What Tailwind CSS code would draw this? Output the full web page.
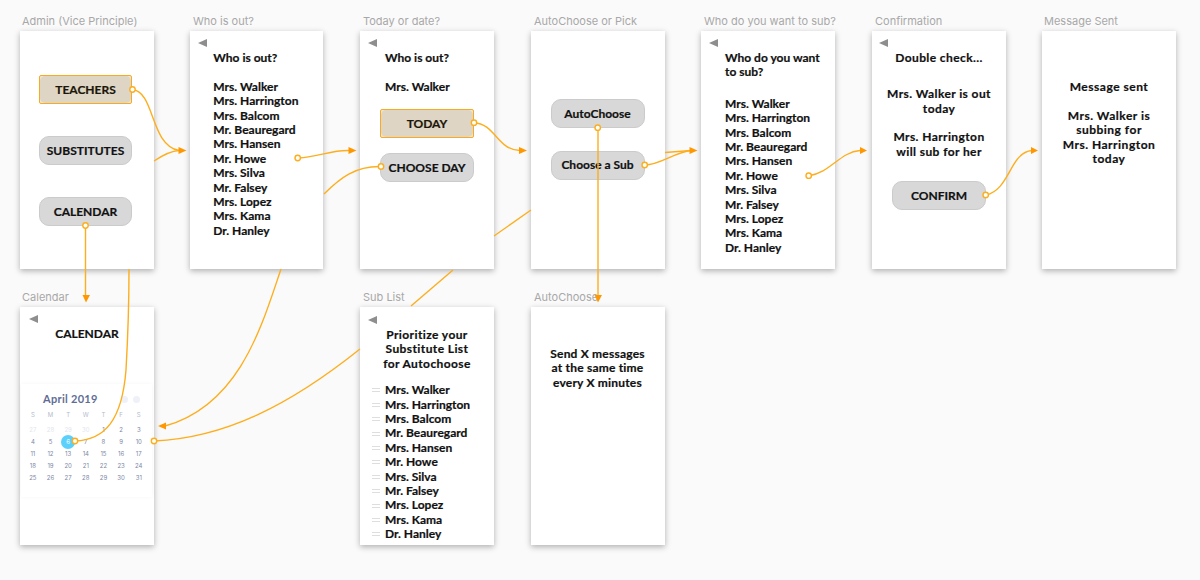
<!DOCTYPE html>
<html lang="en">
<head>
    <meta charset="UTF-8">
    <title>Substitute flow</title>
    <script src="https://cdn.jsdelivr.net/npm/@tailwindcss/browser@4"></script>
</head>
<body class="bg-[#fafafa] font-['Lato',sans-serif] text-[12px] leading-[14.4px] font-bold text-[#111] [-webkit-text-stroke:0.2px]">
<div class="relative w-[1200px] h-[580px] overflow-hidden">

    <!-- artboard labels -->
    <div class="absolute left-[22px] top-[14px] font-['Inter',sans-serif] text-[11px] font-normal text-[#a8a8a8] [-webkit-text-stroke:0]">Admin (Vice Principle)</div>
    <div class="absolute left-[193px] top-[14px] font-['Inter',sans-serif] text-[11px] font-normal text-[#a8a8a8] [-webkit-text-stroke:0]">Who is out?</div>
    <div class="absolute left-[363px] top-[14px] font-['Inter',sans-serif] text-[11px] font-normal text-[#a8a8a8] [-webkit-text-stroke:0]">Today or date?</div>
    <div class="absolute left-[534px] top-[14px] font-['Inter',sans-serif] text-[11px] font-normal text-[#a8a8a8] [-webkit-text-stroke:0]">AutoChoose or Pick</div>
    <div class="absolute left-[704px] top-[14px] font-['Inter',sans-serif] text-[11px] font-normal text-[#a8a8a8] [-webkit-text-stroke:0]">Who do you want to sub?</div>
    <div class="absolute left-[875px] top-[14px] font-['Inter',sans-serif] text-[11px] font-normal text-[#a8a8a8] [-webkit-text-stroke:0]">Confirmation</div>
    <div class="absolute left-[1044px] top-[14px] font-['Inter',sans-serif] text-[11px] font-normal text-[#a8a8a8] [-webkit-text-stroke:0]">Message Sent</div>
    <div class="absolute left-[22px] top-[290px] font-['Inter',sans-serif] text-[11px] font-normal text-[#a8a8a8] [-webkit-text-stroke:0]">Calendar</div>
    <div class="absolute left-[363px] top-[290px] font-['Inter',sans-serif] text-[11px] font-normal text-[#a8a8a8] [-webkit-text-stroke:0]">Sub List</div>
    <div class="absolute left-[534px] top-[290px] font-['Inter',sans-serif] text-[11px] font-normal text-[#a8a8a8] [-webkit-text-stroke:0]">AutoChoose</div>

    <!-- Admin -->
    <div class="absolute left-[20px] top-[31px] w-[134px] h-[238px] bg-white shadow-[0_2px_6px_rgba(0,0,0,0.3)] flex flex-col gap-[32px] pt-[44px] pl-[19px]">
        <div class="w-[93px] h-[29px] border border-[#f8ab20] rounded-[2px] bg-[#efe6d6]">
            <div class="h-full bg-[#ded5c4] rounded-[5px] flex items-center justify-center pt-px text-[#1c1608]">TEACHERS</div>
        </div>
        <div class="w-[93px] h-[29px] border border-[#cbcbcb] bg-[#d8d8d8] rounded-[10px] flex items-center justify-center pt-px">SUBSTITUTES</div>
        <div class="w-[93px] h-[29px] border border-[#cbcbcb] bg-[#d8d8d8] rounded-[10px] flex items-center justify-center pt-px">CALENDAR</div>
    </div>

    <!-- Who is out -->
    <div class="absolute left-[190.3px] top-[31px] w-[133px] h-[238px] bg-white shadow-[0_2px_6px_rgba(0,0,0,0.3)] pt-[20px] pl-[23px]">
        <div class="absolute left-[8px] top-[8px] w-0 h-0 border-y-[4px] border-y-transparent border-r-[9px] border-r-[#8e8e8e]"></div>
        <p>Who is out?</p>
        <ul class="mt-[14.4px]">
            <li>Mrs. Walker</li>
            <li>Mrs. Harrington</li>
            <li>Mrs. Balcom</li>
            <li>Mr. Beauregard</li>
            <li>Mrs. Hansen</li>
            <li>Mr. Howe</li>
            <li>Mrs. Silva</li>
            <li>Mr. Falsey</li>
            <li>Mrs. Lopez</li>
            <li>Mrs. Kama</li>
            <li>Dr. Hanley</li>
        </ul>
    </div>

    <!-- Today or date -->
    <div class="absolute left-[360px] top-[31px] w-[134px] h-[238px] bg-white shadow-[0_2px_6px_rgba(0,0,0,0.3)] pt-[20px]">
        <div class="absolute left-[8px] top-[8px] w-0 h-0 border-y-[4px] border-y-transparent border-r-[9px] border-r-[#8e8e8e]"></div>
        <p class="pl-[25px]">Who is out?</p>
        <p class="pl-[25px] mt-[14.4px]">Mrs. Walker</p>
        <div class="ml-[20px] mt-[15px] w-[94px] h-[29px] border border-[#f8ab20] rounded-[2px] bg-[#efe6d6]">
            <div class="h-full bg-[#ded5c4] rounded-[5px] flex items-center justify-center text-[#1c1608]">TODAY</div>
        </div>
        <div class="ml-[20px] mt-[15px] w-[94px] h-[29px] border border-[#cbcbcb] bg-[#d8d8d8] rounded-[10px] flex items-center justify-center">CHOOSE DAY</div>
    </div>

    <!-- AutoChoose or Pick -->
    <div class="absolute left-[530.5px] top-[31px] w-[134px] h-[238px] bg-white shadow-[0_2px_6px_rgba(0,0,0,0.3)] flex flex-col gap-[23px] pt-[68px] pl-[20px]">
        <div class="w-[94px] h-[29px] border border-[#cbcbcb] bg-[#d8d8d8] rounded-[10px] flex items-center justify-center pt-px">AutoChoose</div>
        <div class="w-[94px] h-[29px] border border-[#cbcbcb] bg-[#d8d8d8] rounded-[10px] flex items-center justify-center">Choose a Sub</div>
    </div>

    <!-- Who do you want to sub -->
    <div class="absolute left-[701px] top-[31px] w-[134px] h-[238px] bg-white shadow-[0_2px_6px_rgba(0,0,0,0.3)] pt-[20px] pl-[24px]">
        <div class="absolute left-[8px] top-[8px] w-0 h-0 border-y-[4px] border-y-transparent border-r-[9px] border-r-[#8e8e8e]"></div>
        <p>Who do you want<br>to sub?</p>
        <ul class="mt-[17px]">
            <li>Mrs. Walker</li>
            <li>Mrs. Harrington</li>
            <li>Mrs. Balcom</li>
            <li>Mr. Beauregard</li>
            <li>Mrs. Hansen</li>
            <li>Mr. Howe</li>
            <li>Mrs. Silva</li>
            <li>Mr. Falsey</li>
            <li>Mrs. Lopez</li>
            <li>Mrs. Kama</li>
            <li>Dr. Hanley</li>
        </ul>
    </div>

    <!-- Confirmation -->
    <div class="absolute left-[872px] top-[31px] w-[134px] h-[238px] bg-white shadow-[0_2px_6px_rgba(0,0,0,0.3)] pt-[20px] text-center tracking-[0.4px]">
        <div class="absolute left-[7px] top-[8px] w-0 h-0 border-y-[4px] border-y-transparent border-r-[9px] border-r-[#8e8e8e]"></div>
        <p>Double check...</p>
        <p class="mt-[21px] leading-[15px]">Mrs. Walker is out<br>today</p>
        <p class="mt-[13px] leading-[15px]">Mrs. Harrington<br>will sub for her</p>
        <div class="ml-[20px] mt-[22px] w-[94px] h-[29px] border border-[#cbcbcb] bg-[#d8d8d8] rounded-[10px] flex items-center justify-center tracking-normal">CONFIRM</div>
    </div>

    <!-- Message sent -->
    <div class="absolute left-[1042px] top-[31px] w-[134px] h-[238px] bg-white shadow-[0_2px_6px_rgba(0,0,0,0.3)] pt-[49px] text-center tracking-[0.5px]">
        <p>Message sent</p>
        <p class="mt-[14.4px]">Mrs. Walker is<br>subbing for<br>Mrs. Harrington<br>today</p>
    </div>

    <!-- Calendar -->
    <div class="absolute left-[20px] top-[307px] w-[134px] h-[238px] bg-white shadow-[0_2px_6px_rgba(0,0,0,0.3)] pt-[20px]">
        <div class="absolute left-[9px] top-[8px] w-0 h-0 border-y-[4px] border-y-transparent border-r-[9px] border-r-[#8e8e8e]"></div>
        <p class="text-center">CALENDAR</p>
        <div class="ml-[1px] mt-[43px] w-[131px] h-[113px] bg-white shadow-[0_0_4px_rgba(0,0,0,0.04)] pt-[8px] font-['Inter',sans-serif] font-normal text-[6px] leading-[12px] text-[#7d87a6] [-webkit-text-stroke:0]">
            <div class="flex items-center h-[14px] pl-[22px]">
                <span class="w-[78px] font-['Lato',sans-serif] font-bold text-[11px] tracking-[0.3px] text-[#5f6d96]">April 2019</span>
                <span class="w-[7px] h-[7px] rounded-full bg-[#eff1f8]"></span>
                <span class="ml-[5px] w-[7px] h-[7px] rounded-full bg-[#eff1f8]"></span>
            </div>
            <div class="grid grid-cols-[repeat(7,17.67px)] pl-[3px] mt-[3px] text-center text-[#b4bacd]">
                <span>S</span><span>M</span><span>T</span><span>W</span><span>T</span><span>F</span><span>S</span>
            </div>
            <div class="grid grid-cols-[repeat(7,17.67px)] pl-[3px] mt-[3px] text-center">
                <span class="text-[#e3e6ee]">27</span><span class="text-[#e3e6ee]">28</span><span class="text-[#e3e6ee]">29</span><span class="text-[#e3e6ee]">30</span><span>1</span><span>2</span><span>3</span>
                <span>4</span><span>5</span><span class="relative z-0 text-white"><i class="absolute left-[2px] top-[-1px] -z-10 w-[14px] h-[14px] rounded-full bg-[#5bd0fb]"></i>6</span><span>7</span><span>8</span><span>9</span><span>10</span>
                <span>11</span><span>12</span><span>13</span><span>14</span><span>15</span><span>16</span><span>17</span>
                <span>18</span><span>19</span><span>20</span><span>21</span><span>22</span><span>23</span><span>24</span>
                <span>25</span><span>26</span><span>27</span><span>28</span><span>29</span><span>30</span><span>31</span>
            </div>
        </div>
    </div>

    <!-- Sub list -->
    <div class="absolute left-[360px] top-[307px] w-[134px] h-[238px] bg-white shadow-[0_2px_6px_rgba(0,0,0,0.3)] pt-[21px]">
        <div class="absolute left-[8px] top-[9px] w-0 h-0 border-y-[4px] border-y-transparent border-r-[9px] border-r-[#8e8e8e]"></div>
        <p class="text-center tracking-[0.4px]">Prioritize your<br>Substitute List<br>for Autochoose</p>
        <ul class="mt-[12px] pl-[12px] flex flex-col">
            <li class="flex items-center gap-[5px]"><span class="w-[8px] h-[4px] border-y border-[#dedede]"></span>Mrs. Walker</li>
            <li class="flex items-center gap-[5px]"><span class="w-[8px] h-[4px] border-y border-[#dedede]"></span>Mrs. Harrington</li>
            <li class="flex items-center gap-[5px]"><span class="w-[8px] h-[4px] border-y border-[#dedede]"></span>Mrs. Balcom</li>
            <li class="flex items-center gap-[5px]"><span class="w-[8px] h-[4px] border-y border-[#dedede]"></span>Mr. Beauregard</li>
            <li class="flex items-center gap-[5px]"><span class="w-[8px] h-[4px] border-y border-[#dedede]"></span>Mrs. Hansen</li>
            <li class="flex items-center gap-[5px]"><span class="w-[8px] h-[4px] border-y border-[#dedede]"></span>Mr. Howe</li>
            <li class="flex items-center gap-[5px]"><span class="w-[8px] h-[4px] border-y border-[#dedede]"></span>Mrs. Silva</li>
            <li class="flex items-center gap-[5px]"><span class="w-[8px] h-[4px] border-y border-[#dedede]"></span>Mr. Falsey</li>
            <li class="flex items-center gap-[5px]"><span class="w-[8px] h-[4px] border-y border-[#dedede]"></span>Mrs. Lopez</li>
            <li class="flex items-center gap-[5px]"><span class="w-[8px] h-[4px] border-y border-[#dedede]"></span>Mrs. Kama</li>
            <li class="flex items-center gap-[5px]"><span class="w-[8px] h-[4px] border-y border-[#dedede]"></span>Dr. Hanley</li>
        </ul>
    </div>

    <!-- AutoChoose -->
    <div class="absolute left-[530.5px] top-[307px] w-[134px] h-[238px] bg-white shadow-[0_2px_6px_rgba(0,0,0,0.3)] pt-[40px] text-center tracking-[0.2px]">
        <p>Send X messages<br>at the same time<br>every X minutes</p>
    </div>

    <!-- prototype links, only the parts that show in front of the artboards -->
    <svg class="absolute left-0 top-0 pointer-events-none" width="1200" height="580" viewBox="0 0 1200 580" fill="none" stroke="#fdae1e" stroke-width="1.4">
        <path d="M132.5 89.5C155 92 150 145 179 150.5"/>
        <path d="M154 161C163 155 170 151 179 150.5"/>
        <path d="M85.5 225.5V296"/>
        <path d="M75 441C105 440 122 420 126 370C128 335 129 300 129 269"/>
        <path d="M281 269C262 325 240 405 165 426"/>
        <path d="M154 441C225 438 290 405 360 349"/>
        <path d="M411 306L453 270"/>
        <path d="M494 236L531 210"/>
        <path d="M298 158C320 157 330 150 349 150.5"/>
        <path d="M324 194C340 178 355 166 381 166.5"/>
        <path d="M474 123C495 123 497 150 520 150.5"/>
        <path d="M598 127.5V296"/>
        <path d="M645 165C660 165 675 152 691 150.5"/>
        <path d="M665 152.5L691 150.5"/>
        <path d="M809 175.7C830 173 840 152 860 150.5"/>
        <path d="M986 195C1010 190 1010 152 1032 150.5"/>
        <g fill="#ff9800" stroke="none">
            <path d="M178.500 147L186.500 150.500L178.500 154Z"/>
            <path d="M348.500 147L356.500 150.500L348.500 154Z"/>
            <path d="M519 147L527 150.500L519 154Z"/>
            <path d="M689.500 147L697.500 150.500L689.500 154Z"/>
            <path d="M860 147L867 150.500L860 154Z"/>
            <path d="M1031 147L1038 150.500L1031 154Z"/>
            <path d="M82.500 295L90 295L86 302.500Z"/>
            <path d="M594.500 295L602 295L598 302.500Z"/>
            <path d="M158 426L166 422.500L166 429.500Z"/>
        </g>
        <g fill="#fff">
            <circle cx="132.500" cy="89.500" r="2.700"/>
            <circle cx="85.500" cy="225.500" r="2.700"/>
            <circle cx="297.700" cy="158" r="2.700"/>
            <circle cx="381" cy="166.500" r="2.700"/>
            <circle cx="474" cy="122.700" r="2.700"/>
            <circle cx="597.700" cy="127.700" r="2.700"/>
            <circle cx="644.700" cy="165" r="2.700"/>
            <circle cx="808.700" cy="175.700" r="2.700"/>
            <circle cx="985.700" cy="195" r="2.700"/>
            <circle cx="75" cy="441" r="2.700"/>
            <circle cx="154" cy="441" r="2.700"/>
        </g>
    </svg>
</div>
</body>
</html>
